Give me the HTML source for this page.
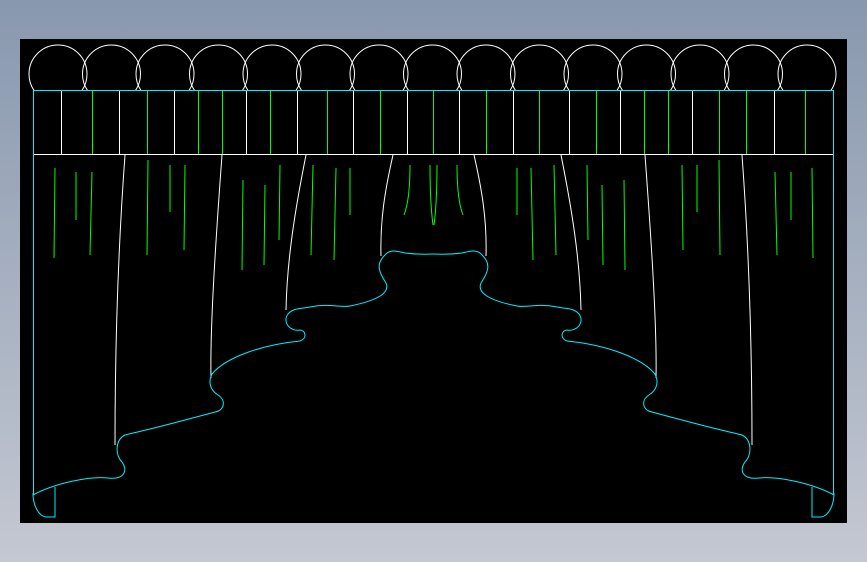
<!DOCTYPE html>
<html><head><style>
html,body{margin:0;padding:0;}
body{width:867px;height:562px;background:linear-gradient(#8898ae,#c4c8d2);overflow:hidden;}
</style></head><body>
<svg width="867" height="562" viewBox="0 0 867 562" style="position:absolute;left:0;top:0">
<rect x="20" y="39" width="827" height="484" fill="#000"/>
<defs><clipPath id="c"><rect x="0" y="0" width="867" height="90"/></clipPath></defs>
<g fill="none" stroke="#fff" stroke-width="1" clip-path="url(#c)">
<circle cx="58" cy="74" r="29"/><circle cx="111.5" cy="74" r="29"/><circle cx="165" cy="74" r="29"/><circle cx="218.5" cy="74" r="29"/><circle cx="272" cy="74" r="29"/><circle cx="325.5" cy="74" r="29"/><circle cx="379" cy="74" r="29"/><circle cx="432.5" cy="74" r="29"/><circle cx="486" cy="74" r="29"/><circle cx="539.5" cy="74" r="29"/><circle cx="593" cy="74" r="29"/><circle cx="646.5" cy="74" r="29"/><circle cx="700" cy="74" r="29"/><circle cx="753.5" cy="74" r="29"/><circle cx="807" cy="74" r="29"/>
</g>
<line x1="33" y1="154.5" x2="833" y2="154.5" stroke="#fff" shape-rendering="crispEdges"/>
<g stroke="#00ff00" stroke-width="1" shape-rendering="crispEdges">
<line x1="61.5" y1="90" x2="61.5" y2="154" stroke="#fff"/><line x1="92.5" y1="90" x2="92.5" y2="154"/><line x1="119.5" y1="90" x2="119.5" y2="154" stroke="#fff"/><line x1="147.5" y1="90" x2="147.5" y2="154"/><line x1="174.5" y1="90" x2="174.5" y2="154" stroke="#fff"/><line x1="198.5" y1="90" x2="198.5" y2="154"/><line x1="222.5" y1="90" x2="222.5" y2="154"/><line x1="246.5" y1="90" x2="246.5" y2="154" stroke="#fff"/><line x1="270.5" y1="90" x2="270.5" y2="154"/><line x1="297.5" y1="90" x2="297.5" y2="154" stroke="#fff"/><line x1="327.5" y1="90" x2="327.5" y2="154"/><line x1="353.5" y1="90" x2="353.5" y2="154" stroke="#fff"/><line x1="380.5" y1="90" x2="380.5" y2="154"/><line x1="407.5" y1="90" x2="407.5" y2="154" stroke="#fff"/><line x1="433.5" y1="90" x2="433.5" y2="154"/><line x1="459.5" y1="90" x2="459.5" y2="154" stroke="#fff"/><line x1="486.5" y1="90" x2="486.5" y2="154"/><line x1="513.5" y1="90" x2="513.5" y2="154" stroke="#fff"/><line x1="539.5" y1="90" x2="539.5" y2="154"/><line x1="569.5" y1="90" x2="569.5" y2="154" stroke="#fff"/><line x1="596.5" y1="90" x2="596.5" y2="154"/><line x1="620.5" y1="90" x2="620.5" y2="154" stroke="#fff"/><line x1="644.5" y1="90" x2="644.5" y2="154"/><line x1="668.5" y1="90" x2="668.5" y2="154"/><line x1="692.5" y1="90" x2="692.5" y2="154" stroke="#fff"/><line x1="719.5" y1="90" x2="719.5" y2="154"/><line x1="746.5" y1="90" x2="746.5" y2="154"/><line x1="774.5" y1="90" x2="774.5" y2="154" stroke="#fff"/><line x1="805.5" y1="90" x2="805.5" y2="154"/>
</g>
<g id="half" fill="none">
<g stroke="#00ff00">
<line x1="55" y1="168" x2="54" y2="258"/><line x1="76" y1="172" x2="76" y2="220"/><line x1="92" y1="172" x2="90" y2="255"/><line x1="148" y1="160" x2="147" y2="255"/><line x1="170" y1="165" x2="170" y2="212"/><line x1="185" y1="165" x2="184" y2="250"/><line x1="243" y1="180" x2="242" y2="270"/><line x1="265" y1="185" x2="264" y2="265"/><line x1="280" y1="165" x2="279" y2="240"/><line x1="313" y1="165" x2="311" y2="255"/><line x1="336" y1="168" x2="334" y2="260"/><line x1="350" y1="168" x2="350" y2="215"/><path d="M410,165 C410,190 408,205 404,215"/><path d="M430,165 C430,190 431,210 433,225"/>
</g>
<g stroke="#fff">
<path d="M125,155 C118,250 115,350 115,445"/>
<path d="M222,155 C215,250 210,330 211,378"/>
<path d="M306,155 C295,210 287,260 286,310"/>
<path d="M393,155 C385,190 380,220 381,256"/>
</g>
<g stroke="#00f0ff">
<line x1="33" y1="90.5" x2="433.5" y2="90.5" shape-rendering="crispEdges"/>
<line x1="33.5" y1="90" x2="33.5" y2="495" shape-rendering="crispEdges"/>
<path d="M33,495 C55,483 90,476 108,478 C125,480 128,470 122,462 C115,455 115,440 125,435 L133,433 C160,427 200,416 215,412 C225,410 226,400 218,395 C210,390 208,382 212,374 C225,358 260,345 300,341 C308,338 305,330 300,330 C290,332 282,322 288,314 C293,308 300,309 310,307 C330,303 340,308 350,306 C380,300 390,292 386,283 C381,275 374,265 385,255 C390,248 400,252 405,253 C420,255 433,254 434,254"/>
<path d="M55,487 L55,517 L46,517 A14 24 0 0 1 33,493"/>
</g>
</g>
<use href="#half" transform="translate(867,0) scale(-1,1)"/>
</svg>
</body></html>
